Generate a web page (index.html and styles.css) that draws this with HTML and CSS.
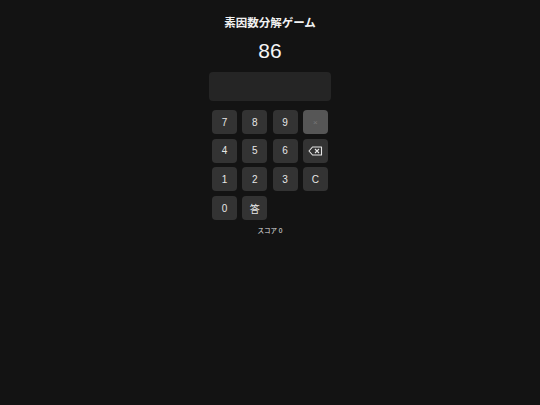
FILE: index.html
```html
<!DOCTYPE html>
<html lang="ja">
<head>
    <meta charset="UTF-8">
    <meta name="viewport" content="width=device-width, initial-scale=1.0">
    <title>素因数分解ゲーム</title>
    <link rel="stylesheet" href="styles.css">
</head>
<body>

    <main class="game">
        <h1 class="title">素因数分解ゲーム</h1>
        <div class="target" id="target">86</div>
        <div class="answer" id="answer"></div>

        <div class="keypad">
            <button class="key">7</button>
            <button class="key">8</button>
            <button class="key">9</button>
            <button class="key key-times" disabled>×</button>
            <button class="key">4</button>
            <button class="key">5</button>
            <button class="key">6</button>
            <button class="key key-back">
                <svg width="15" height="10" viewBox="0 0 15 10">
                    <path d="M4.5 1 H13.5 V9 H4.5 L1 5 Z" fill="none" stroke="currentColor" stroke-width="1.1" stroke-linejoin="round"/>
                    <path d="M7 3 L11 7 M11 3 L7 7" stroke="currentColor" stroke-width="1.1"/>
                </svg>
            </button>
            <button class="key">1</button>
            <button class="key">2</button>
            <button class="key">3</button>
            <button class="key">C</button>
            <button class="key">0</button>
            <button class="key">答</button>
        </div>

        <p class="score">スコア <span id="score">0</span></p>
    </main>

</body>
</html>
```

FILE: styles.css
```css
/* 素因数分解ゲームの見た目 */
body {
    margin: 0;
    background-color: #131313;
    color: #eee;
    font-family: "Liberation Sans", "Noto Sans CJK JP", sans-serif;
}

.game {
    display: flex;
    flex-direction: column;
    align-items: center;
    padding-top: 15px;
}

.title {
    margin: 0;
    font-size: 11.5px;
    font-weight: bold;
    line-height: 17px;
    color: #f2f2f2;
}

.target {
    margin-top: 7px;
    font-size: 21px;
    line-height: 24px;
    color: #f5f5f5;
}

.answer {
    margin-top: 9px;
    width: 122px;
    height: 29px;
    background-color: #252525;
    border-radius: 4px;
}

.keypad {
    margin-top: 9px;
    display: grid;
    grid-template-columns: repeat(4, 25px);
    grid-auto-rows: 24px;
    column-gap: 5.3px;
    row-gap: 4.7px;
}

.key {
    padding: 0;
    border: none;
    border-radius: 4px;
    background-color: #333;
    color: #e6e6e6;
    font-family: inherit;
    font-size: 10px;
    display: flex;
    align-items: center;
    justify-content: center;
    cursor: pointer;
}

.key-times {
    background-color: #565656;
    color: #777;
    font-size: 8px;
    cursor: default;
}

.key-back svg { display: block; }

.score {
    margin: 5px 0 0;
    font-size: 6.5px;
    color: #e6e6e6;
}
```
